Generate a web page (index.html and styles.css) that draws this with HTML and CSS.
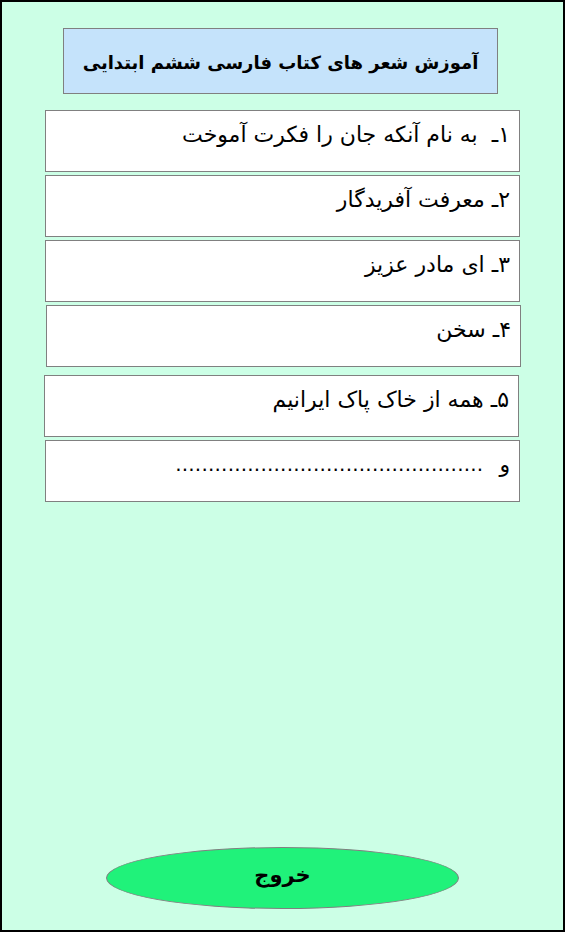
FILE: index.html
```html
<!DOCTYPE html>
<html lang="fa" dir="rtl">
<head>
<meta charset="utf-8">
<title>آموزش شعر</title>
<link rel="stylesheet" href="styles.css">
</head>
<body>
<div class="frame">
  <div class="title">آموزش شعر های کتاب فارسی ششم ابتدایی</div>
  <div class="list">
    <div class="item">۱ـ&nbsp; به نام آنکه جان را فکرت آموخت</div>
    <div class="item">۲ـ معرفت آفریدگار</div>
    <div class="item">۳ـ ای مادر عزیز</div>
    <div class="item shift-r">۴ـ سخن</div>
    <div class="item shift-l gap">۵ـ همه از خاک پاک ایرانیم</div>
    <div class="item"><span class="waw">و</span><span class="dots">...............................................</span></div>
  </div>
  <div class="spacer"></div>
  <div class="exit">خروج</div>
</div>
</body>
</html>
```
FILE: styles.css
```css
html, body {
  margin: 0;
  padding: 0;
  width: 565px;
  height: 932px;
  overflow: hidden;
}
body {
  font-family: "DejaVu Sans", serif;
  color: #000;
}
.frame {
  box-sizing: border-box;
  width: 565px;
  height: 932px;
  border: 2px solid #000;
  background: #ccffe6;
  display: flex;
  flex-direction: column;
  align-items: flex-start;
  padding-top: 26px;
}
.title {
  box-sizing: border-box;
  width: 435px;
  height: 66px;
  margin-right: 65px;
  background: #c5e3fb;
  border: 1px solid #808080;
  font-size: 18px;
  font-weight: bold;
  white-space: nowrap;
  padding-top: 3px;
  display: flex;
  align-items: center;
  justify-content: center;
}
.list {
  display: flex;
  flex-direction: column;
  gap: 3px;
  margin-top: 16px;
  margin-right: 43px;
}
.item {
  box-sizing: border-box;
  width: 475px;
  height: 62px;
  background: #fff;
  border: 1px solid #808080;
  font-size: 22px;
  padding: 11px 9px 0 9px;
  white-space: nowrap;
  display: flex;
}
.waw { margin-left: 16px; }
.dots { font-size: 20px; letter-spacing: 0.2px; }
.shift-r { margin-right: -1px; }
.shift-l { margin-right: 1px; }
.gap { margin-top: 5px; }
.spacer { flex: 1; }
.exit {
  box-sizing: border-box;
  width: 353px;
  height: 62px;
  margin-right: 104px;
  margin-bottom: 21px;
  border-radius: 50%;
  background: #20f27a;
  border: 1px solid #808080;
  font-size: 21px;
  font-weight: bold;
  padding-bottom: 6px;
  display: flex;
  align-items: center;
  justify-content: center;
}
```
